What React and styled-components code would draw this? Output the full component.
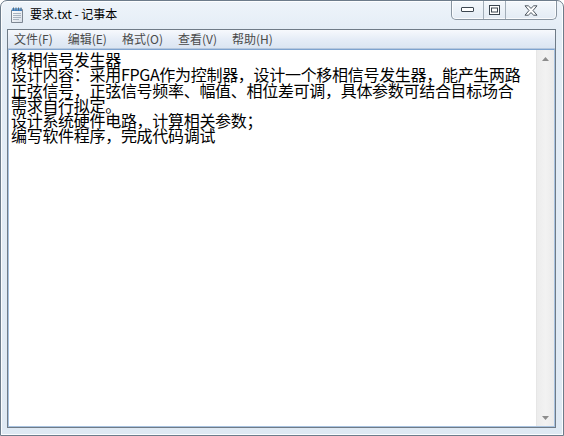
import React from "react";
import styled, { createGlobalStyle } from "styled-components";

const Global = createGlobalStyle`
  html, body { margin: 0; padding: 0; background: #ffffff; }
  #root { width: 564px; height: 436px; }
`;

const Window = styled.div`
  box-sizing: border-box;
  width: 564px;
  height: 436px;
  border: 1px solid #6d7c8b;
  border-radius: 7px 7px 0 0;
  background: linear-gradient(180deg, #eef4fa 0px, #e4edf6 28px, #dfe9f3 100%);
  box-shadow: inset 0 0 0 1px rgba(255, 255, 255, 0.85);
  display: flex;
  flex-direction: column;
  overflow: hidden;
`;

const TitleBar = styled.div`
  height: 28px;
  flex: none;
  display: flex;
  align-items: flex-start;
  justify-content: space-between;
  padding: 0 6px 0 8px;
`;

const TitleLeft = styled.div`
  display: flex;
  align-items: center;
  gap: 5px;
  height: 26px;
  padding-top: 1px;
`;

const TitleText = styled.span`
  font-family: "Noto Sans CJK SC", "Liberation Sans", sans-serif;
  font-size: 12px;
  color: #000;
  line-height: 14px;
  margin-top: -2px;
`;

const Caption = styled.div`
  display: flex;
  height: 18px;
  border: 1px solid #8894a0;
  border-top: none;
  border-radius: 0 0 5px 5px;
  overflow: hidden;
  background: linear-gradient(180deg, #f4f8fc, #e3ebf4);
  box-shadow: inset 0 0 0 1px rgba(255,255,255,0.8);
`;

const CapBtn = styled.div`
  width: ${(p) => p.$w}px;
  height: 18px;
  display: flex;
  align-items: center;
  justify-content: center;
  border-left: ${(p) => (p.$first ? "none" : "1px solid #a2adb8")};
`;

const Client = styled.div`
  flex: 1;
  margin: 0 7px 7px 6px;
  border: 1px solid #6f7b87;
  display: flex;
  flex-direction: column;
  background: #fff;
`;

const MenuBar = styled.div`
  height: 18px;
  flex: none;
  display: flex;
  align-items: center;
  gap: 15px;
  padding-left: 6px;
  background: linear-gradient(180deg, #f7f9fd 0%, #e6edf7 50%, #dbe5f2 100%);
  border-bottom: 1px solid #b6c7dd;
`;

const MenuItem = styled.span`
  font-family: "Noto Sans CJK SC", "Liberation Sans", sans-serif;
  font-size: 12px;
  line-height: 14px;
  color: #4a4a4a;
`;

const EditWrap = styled.div`
  flex: 1;
  display: flex;
  border: 1px solid #a9c3e0;
  border-top-color: #7ea3cf;
  min-height: 0;
`;

const TextArea = styled.div`
  flex: 1;
  padding: 2px 0 0 2px;
  font-family: "Noto Sans CJK SC", sans-serif;
  font-size: 16px;
  line-height: 15.3px;
  color: #000;
  white-space: pre;
  background: #fff;
`;

const Line = styled.div`
  height: 15.3px;
  letter-spacing: -0.3px;
`;

const ScrollBar = styled.div`
  width: 17px;
  flex: none;
  display: flex;
  flex-direction: column;
  justify-content: space-between;
  border-left: 1px solid #e6e6e6;
  background: linear-gradient(90deg, #ececec 0px, #f2f2f2 50%, #ebebeb 100%);
`;

const Arrow = styled.div`
  height: 17px;
  display: flex;
  align-items: center;
  justify-content: center;
`;

const NotepadIcon = () => (
  <svg width="16" height="17" viewBox="0 0 16 17">
    <defs>
      <linearGradient id="pg" x1="0" y1="0" x2="1" y2="1">
        <stop offset="0" stopColor="#ffffff" />
        <stop offset="1" stopColor="#d6dee8" />
      </linearGradient>
      <linearGradient id="bl" x1="0" y1="0" x2="0" y2="1">
        <stop offset="0" stopColor="#8fc3f0" />
        <stop offset="1" stopColor="#2f78c4" />
      </linearGradient>
    </defs>
    <path d="M3 2.5 L13.5 2.5 L13.5 15.5 L2.5 15.5 L2.5 3 Z" fill="url(#pg)" stroke="#7d8793" />
    <rect x="3" y="1" width="10" height="3" fill="url(#bl)" />
    <g stroke="#5b6a78" strokeWidth="1">
      <line x1="4.5" y1="0.5" x2="4.5" y2="3.5" />
      <line x1="7" y1="0.5" x2="7" y2="3.5" />
      <line x1="9.5" y1="0.5" x2="9.5" y2="3.5" />
      <line x1="12" y1="0.5" x2="12" y2="3.5" />
    </g>
    <g stroke="#a8b3c0" strokeWidth="1">
      <line x1="4" y1="6.5" x2="12" y2="6.5" />
      <line x1="4" y1="8.5" x2="12" y2="8.5" />
      <line x1="4" y1="10.5" x2="12" y2="10.5" />
      <line x1="4" y1="12.5" x2="10" y2="12.5" />
    </g>
  </svg>
);

const MinIcon = () => (
  <svg width="13" height="6" viewBox="0 0 13 6">
    <rect x="0.5" y="0.5" width="12" height="4" rx="0.5" fill="#fff" stroke="#3c4650" />
  </svg>
);

const MaxIcon = () => (
  <svg width="11" height="10" viewBox="0 0 11 10">
    <rect x="0.5" y="0.5" width="10" height="9" fill="#fff" stroke="#3c4650" />
    <rect x="2.5" y="3" width="6" height="4" fill="none" stroke="#3c4650" />
  </svg>
);

const CloseIcon = () => (
  <svg width="14" height="11" viewBox="0 0 14 11">
    <path
      d="M1 0.8 L4.3 0.8 L7 3.4 L9.7 0.8 L13 0.8 L9 5.5 L13 10.2 L9.7 10.2 L7 7.6 L4.3 10.2 L1 10.2 L5 5.5 Z"
      fill="#fff"
      stroke="#3c4650"
      strokeWidth="0.9"
      strokeLinejoin="round"
    />
  </svg>
);

const UpArrow = () => (
  <svg width="7" height="4" viewBox="0 0 7 4">
    <path d="M0 4 L3.5 0 L7 4 Z" fill="#8c8c8c" />
  </svg>
);
const DownArrow = () => (
  <svg width="7" height="4" viewBox="0 0 7 4">
    <path d="M0 0 L3.5 4 L7 0 Z" fill="#8c8c8c" />
  </svg>
);

const menus = ["文件(F)", "编辑(E)", "格式(O)", "查看(V)", "帮助(H)"];

const lines = [
  "移相信号发生器",
  "设计内容：采用FPGA作为控制器，设计一个移相信号发生器，能产生两路",
  "正弦信号，正弦信号频率、幅值、相位差可调，具体参数可结合目标场合",
  "需求自行拟定。",
  "设计系统硬件电路，计算相关参数；",
  "编写软件程序，完成代码调试",
];

export default function App() {
  return (
    <>
      <Global />
      <Window>
        <TitleBar>
          <TitleLeft>
            <NotepadIcon />
            <TitleText>要求.txt - 记事本</TitleText>
          </TitleLeft>
          <Caption>
            <CapBtn $w={31} $first>
              <MinIcon />
            </CapBtn>
            <CapBtn $w={21}>
              <MaxIcon />
            </CapBtn>
            <CapBtn $w={50}>
              <CloseIcon />
            </CapBtn>
          </Caption>
        </TitleBar>
        <Client>
          <MenuBar>
            {menus.map((m) => (
              <MenuItem key={m}>{m}</MenuItem>
            ))}
          </MenuBar>
          <EditWrap>
            <TextArea>
              {lines.map((l, i) => (
                <Line key={i}>{l}</Line>
              ))}
            </TextArea>
            <ScrollBar>
              <Arrow>
                <UpArrow />
              </Arrow>
              <Arrow>
                <DownArrow />
              </Arrow>
            </ScrollBar>
          </EditWrap>
        </Client>
      </Window>
    </>
  );
}
